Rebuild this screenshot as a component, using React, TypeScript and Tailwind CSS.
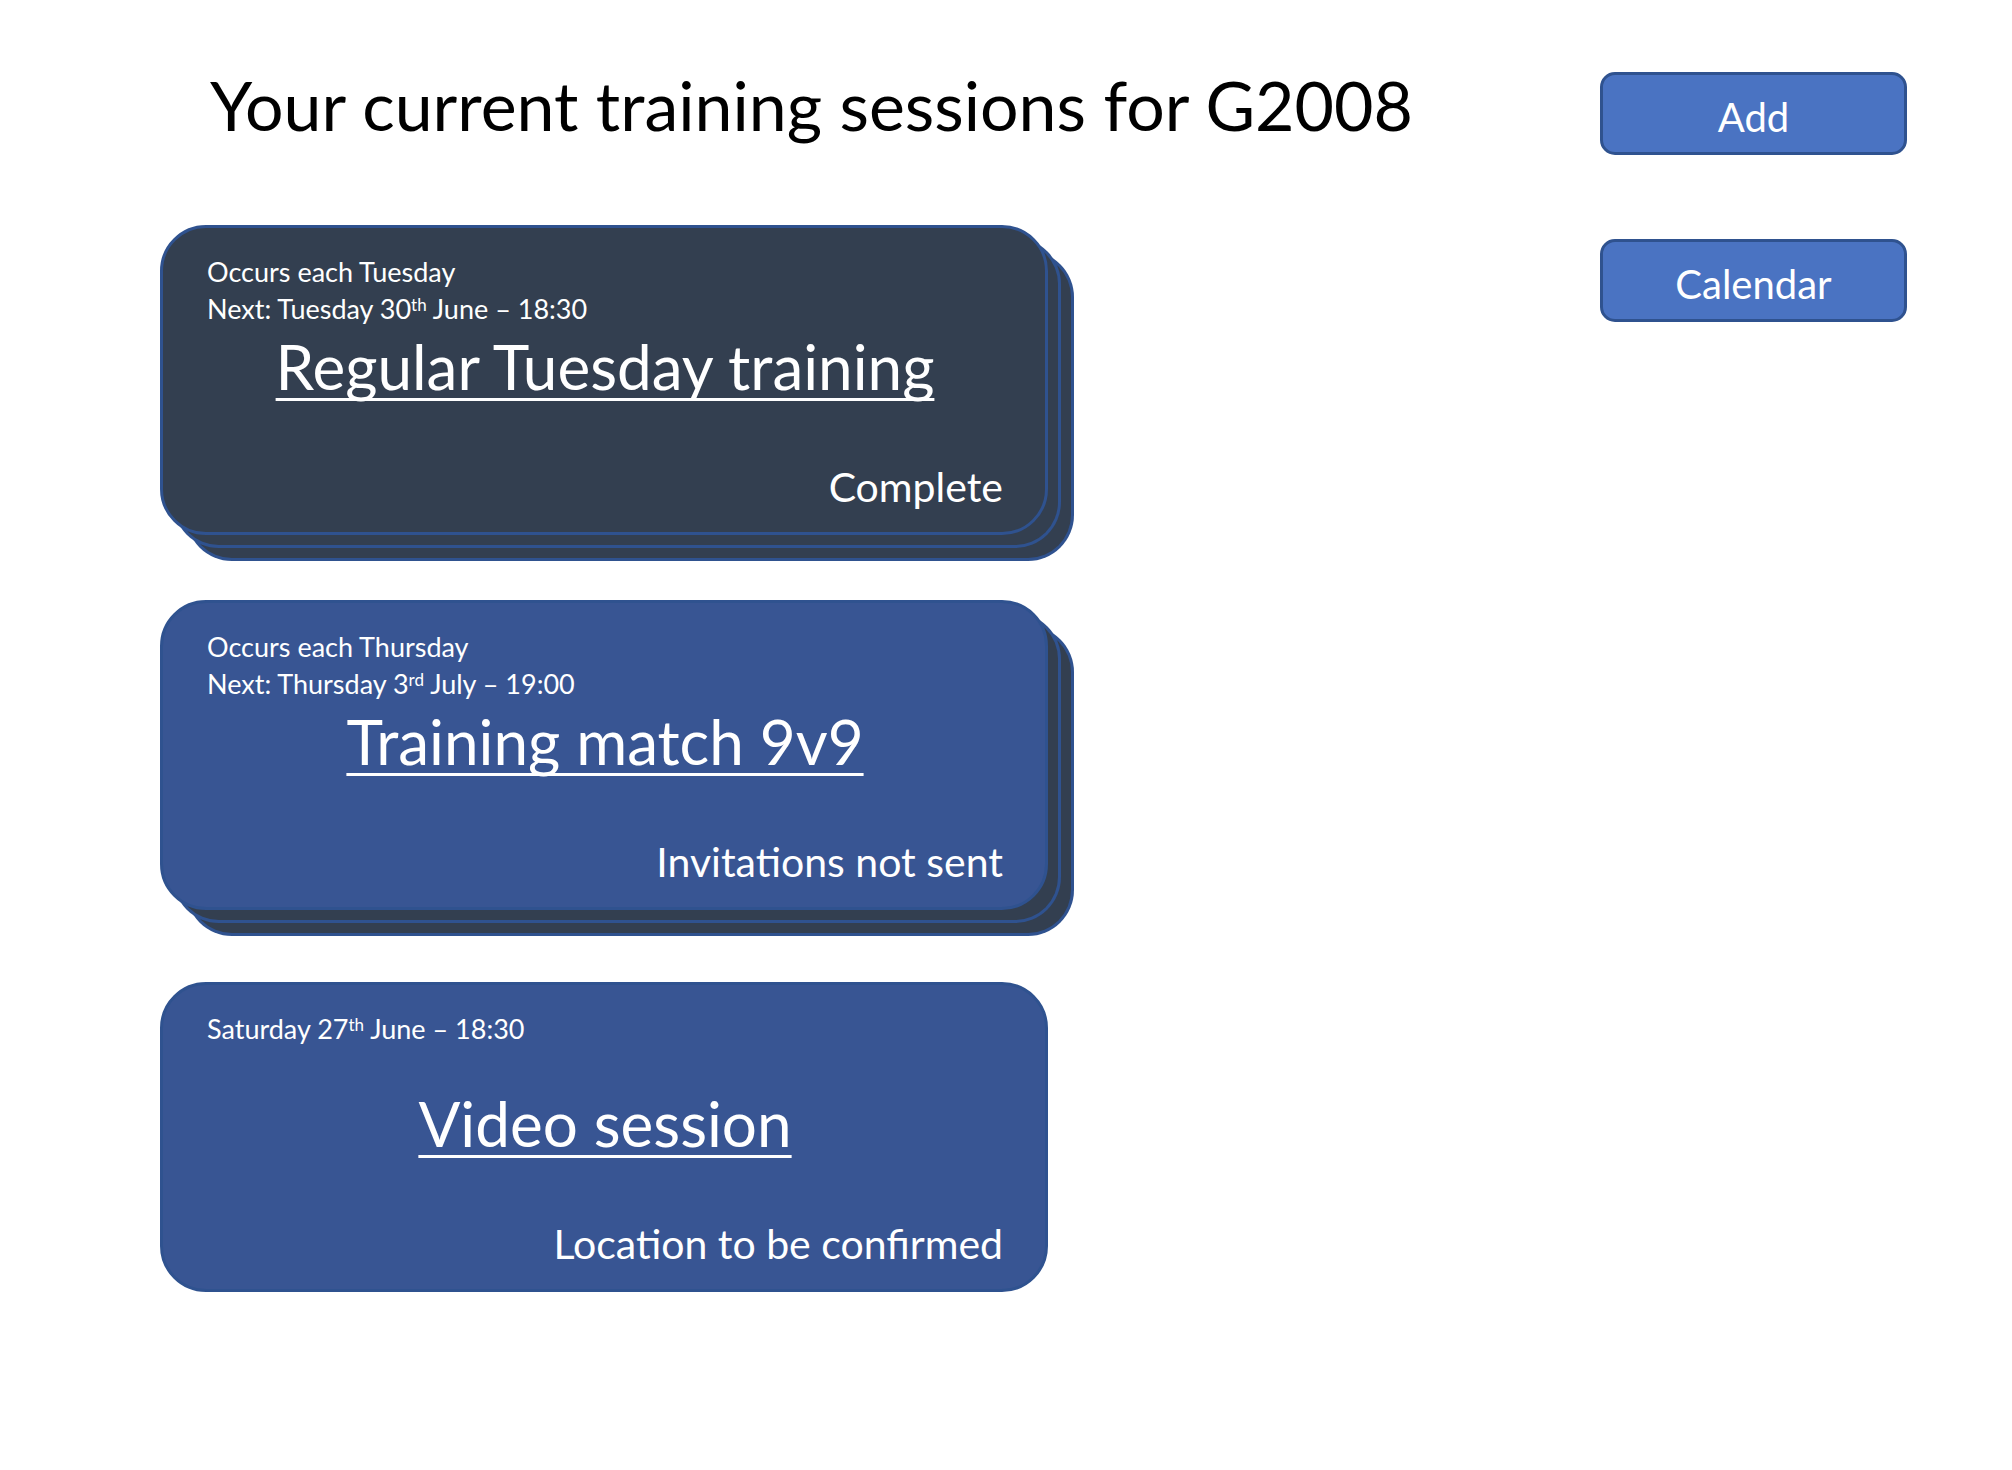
type Session = {
  occurs?: string
  day: string
  num: string
  suffix: string
  rest: string
  title: string
  status: string
  tone: 'dark' | 'blue'
  stacked: boolean
}

const SESSIONS: Session[] = [
  {
    occurs: 'Occurs each Tuesday',
    day: 'Next: Tuesday',
    num: '30',
    suffix: 'th',
    rest: 'June – 18:30',
    title: 'Regular Tuesday training',
    status: 'Complete',
    tone: 'dark',
    stacked: true,
  },
  {
    occurs: 'Occurs each Thursday',
    day: 'Next: Thursday',
    num: '3',
    suffix: 'rd',
    rest: 'July – 19:00',
    title: 'Training match 9v9',
    status: 'Invitations not sent',
    tone: 'blue',
    stacked: true,
  },
  {
    day: 'Saturday',
    num: '27',
    suffix: 'th',
    rest: 'June – 18:30',
    title: 'Video session',
    status: 'Location to be confirmed',
    tone: 'blue',
    stacked: false,
  },
]

function SessionCard({ s }: { s: Session }) {
  const fill = s.tone === 'dark' ? 'bg-[#333f50]' : 'bg-[#385593]'
  const stack = s.stacked
    ? 'shadow-[13px_13px_0_-3px_#333f50,13px_13px_0_0_#2f528f,26px_26px_0_-3px_#333f50,26px_26px_0_0_#2f528f]'
    : ''

  return (
    <div
      className={`flex h-[310px] w-[888px] flex-col rounded-[46px] border-[3px] border-[#2f528f] pl-[44px] pr-[42px] pb-[25px] pt-[25px] text-white ${fill} ${stack}`}
    >
      {/* ── date lines ── */}
      <div className="h-[74px] text-[27px] leading-[37px]">
        {s.occurs && <p>{s.occurs}</p>}
        <p>
          {s.day} {s.num}
          <sup className="text-[17px]">{s.suffix}</sup> {s.rest}
        </p>
      </div>

      <h2 className="mt-[8px] text-center text-[62px] leading-none underline decoration-[3px] underline-offset-[8px] [text-decoration-skip-ink:none]">
        {s.title}
      </h2>

      <p className="mt-auto text-right text-[41px] leading-none">{s.status}</p>
    </div>
  )
}

export default function App() {
  return (
    <div className="h-[1470px] w-[2012px] bg-white font-['Lato',sans-serif] text-black">
      <div className="flex">
        {/* ── Sessions ── */}
        <div className="pl-[160px]">
          <h1 className="pl-[50px] pt-[71px] text-[68px] leading-none">
            Your current training sessions for G2008
          </h1>

          <div className="mt-[86px] flex flex-col">
            <SessionCard s={SESSIONS[0]} />
            <div className="mt-[65px]">
              <SessionCard s={SESSIONS[1]} />
            </div>
            <div className="mt-[72px]">
              <SessionCard s={SESSIONS[2]} />
            </div>
          </div>
        </div>

        {/* ── Actions ── */}
        <div className="ml-auto mr-[105px] flex flex-col gap-[84px] pt-[72px]">
          {['Add', 'Calendar'].map((label) => (
            <button
              key={label}
              className="flex h-[83px] w-[307px] items-center justify-center rounded-[15px] border-[3px] border-[#2f528f] bg-[#4a73c2] pt-[6px] text-[40px] leading-none text-white"
            >
              {label}
            </button>
          ))}
        </div>
      </div>
    </div>
  )
}
